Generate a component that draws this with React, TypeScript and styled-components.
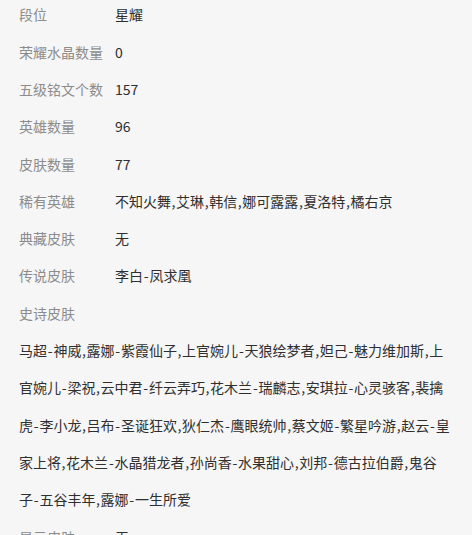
import React from "react";
import styled, { createGlobalStyle } from "styled-components";

const Global = createGlobalStyle`
  html, body { margin: 0; padding: 0; background: #f6f6f6; }
  body { font-family: "Noto Sans CJK SC", "Noto Sans", sans-serif; overflow: hidden; }
`;

const Page = styled.div`
  width: 472px;
  height: 535px;
  overflow: hidden;
  background: #f6f6f6;
  box-sizing: border-box;
  padding: 0 19px;
`;

const List = styled.div`
  margin-top: -3.6px;
  display: flex;
  flex-direction: column;
`;

const Row = styled.div`
  display: grid;
  grid-template-columns: 96px 1fr;
  font-size: 14px;
  line-height: 37.3px;
`;

const Label = styled.div`
  color: #8c8c8c;
  white-space: nowrap;
`;

const Value = styled.div`
  color: #2f2f2f;
  white-space: nowrap;
`;

const Paragraph = styled.div`
  font-size: 14px;
  line-height: 37.3px;
  color: #2f2f2f;
  word-break: break-all;
`;

const Punct = styled.span<{ $gap: number }>`
  margin: 0 ${(p) => p.$gap / 2}px;
`;

const Segment = styled.span``;

function Rich({ text, split }: { text: string; split?: boolean }) {
  const parts = text.split(/([,\-])/).filter((p) => p !== "");
  return (
    <>
      {parts.map((p, i) =>
        p === "," ? (
          <Punct key={i} $gap={1.2}>,</Punct>
        ) : p === "-" ? (
          <Punct key={i} $gap={1.6}>-</Punct>
        ) : split ? (
          Array.from(p).map((c, j) => <Segment key={`${i}-${j}`}>{c}</Segment>)
        ) : (
          <Segment key={i}>{p}</Segment>
        )
      )}
    </>
  );
}

const rows: [string, string][] = [
  ["段位", "星耀"],
  ["荣耀水晶数量", "0"],
  ["五级铭文个数", "157"],
  ["英雄数量", "96"],
  ["皮肤数量", "77"],
  ["稀有英雄", "不知火舞,艾琳,韩信,娜可露露,夏洛特,橘右京"],
  ["典藏皮肤", "无"],
  ["传说皮肤", "李白-凤求凰"],
];

const epic =
  "马超-神威,露娜-紫霞仙子,上官婉儿-天狼绘梦者,妲己-魅力维加斯,上官婉儿-梁祝,云中君-纤云弄巧,花木兰-瑞麟志,安琪拉-心灵骇客,裴擒虎-李小龙,吕布-圣诞狂欢,狄仁杰-鹰眼统帅,蔡文姬-繁星吟游,赵云-皇家上将,花木兰-水晶猎龙者,孙尚香-水果甜心,刘邦-德古拉伯爵,鬼谷子-五谷丰年,露娜-一生所爱";

export default function App() {
  return (
    <Page>
      <Global />
      <List>
        {rows.map(([l, v]) => (
          <Row key={l}>
            <Label>{l}</Label>
            <Value>
              <Rich text={v} />
            </Value>
          </Row>
        ))}
        <Row>
          <Label>史诗皮肤</Label>
          <Value />
        </Row>
        <Paragraph>
          <Rich text={epic} split />
        </Paragraph>
        <Row>
          <Label>显示皮肤</Label>
          <Value>无</Value>
        </Row>
      </List>
    </Page>
  );
}
